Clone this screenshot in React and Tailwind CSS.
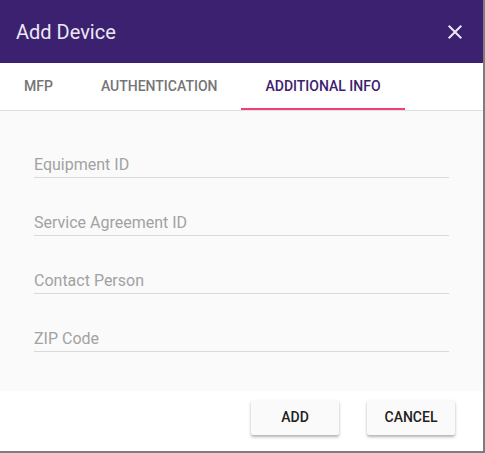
import { useState } from 'react'

const tabs = ['MFP', 'Authentication', 'Additional Info']
const fields = ['Equipment ID', 'Service Agreement ID', 'Contact Person', 'ZIP Code']

const CloseIcon = () => (
  <svg viewBox="0 0 24 24" className="h-6 w-6" fill="currentColor">
    <path d="M19 6.41L17.59 5 12 10.59 6.41 5 5 6.41 10.59 12 5 17.59 6.41 19 12 13.41 17.59 19 19 17.59 13.41 12z" />
  </svg>
)

const App = () => {
  const [active, setActive] = useState(2)
  const [values, setValues] = useState({})

  return (
    <div className="h-[453px] w-[485px] bg-[#7d7d7d] font-['Roboto',sans-serif]">
      <div className="flex h-[451px] w-[483px] flex-col overflow-hidden bg-white">
        <div className="flex h-[63px] items-center justify-between bg-[#3c2170] pl-4 pr-4">
          <h2 className="text-[20px] leading-none text-[#ece8f3]">Add Device</h2>
          <button type="button" className="text-[#ece8f3]">
            <CloseIcon />
          </button>
        </div>

        <div className="flex h-[48px] border-b border-[#e0e0e0] bg-white">
          {tabs.map((tab, i) => (
            <button
              key={tab}
              type="button"
              onClick={() => setActive(i)}
              className={`relative px-6 text-[14px] font-medium uppercase ${
                active === i ? 'text-[#3c2170]' : 'text-[#757575]'
              }`}
            >
              {tab}
              {active === i && (
                <span className="absolute bottom-0 left-0 right-0 h-[2px] bg-[#f0407b]" />
              )}
            </button>
          ))}
        </div>

        <div className="flex h-[280px] flex-col gap-[32px] bg-[#fafafa] px-[34px] pt-[41px]">
          {fields.map((field) => (
            <input
              key={field}
              type="text"
              placeholder={field}
              value={values[field] || ''}
              onChange={(e) => setValues({ ...values, [field]: e.target.value })}
              className="h-[26px] border-b border-[#d9d9d9] bg-transparent text-[16px] text-[#212121] outline-none placeholder:text-[#a2a2a2]"
            />
          ))}
        </div>

        <div className="flex flex-1 items-start justify-end gap-[28px] pr-[28px] pt-[9px]">
          <button
            type="button"
            className="h-[35px] w-[88px] rounded-[2px] bg-[#fafafa] text-[14px] font-medium text-[#212121] shadow-[0_2px_3px_rgba(0,0,0,0.3)]"
          >
            ADD
          </button>
          <button
            type="button"
            className="h-[35px] w-[88px] rounded-[2px] bg-[#fafafa] text-[14px] font-medium text-[#212121] shadow-[0_2px_3px_rgba(0,0,0,0.3)]"
          >
            CANCEL
          </button>
        </div>
      </div>
    </div>
  )
}

export default App
